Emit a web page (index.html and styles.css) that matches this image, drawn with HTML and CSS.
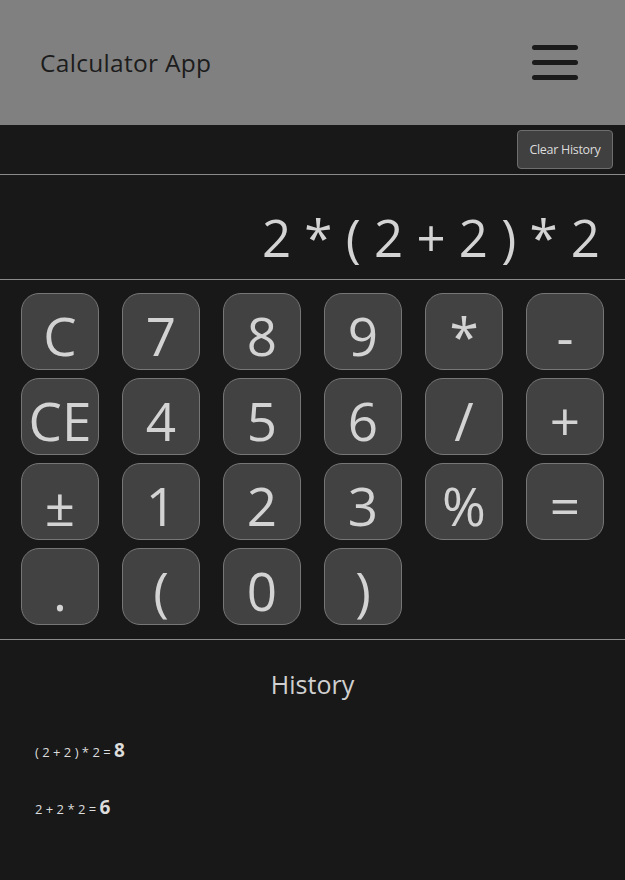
FILE: index.html
```html
<!DOCTYPE html>
<html lang="en">
<head>
<meta charset="utf-8">
<title>Calculator App</title>
<link rel="stylesheet" href="styles.css">
</head>
<body>
<header class="app-header">
  <h1 class="app-title">Calculator App</h1>
  <button class="menu-btn" aria-label="Menu">
    <span class="bar"></span><span class="bar"></span><span class="bar"></span>
  </button>
</header>
<div class="toolbar">
  <button class="clear-history">Clear History</button>
</div>
<div class="display">2 * ( 2 + 2 ) * 2</div>
<div class="keypad">
  <button class="key">C</button>
  <button class="key">7</button>
  <button class="key">8</button>
  <button class="key">9</button>
  <button class="key">*</button>
  <button class="key">-</button>
  <button class="key">CE</button>
  <button class="key">4</button>
  <button class="key">5</button>
  <button class="key">6</button>
  <button class="key">/</button>
  <button class="key">+</button>
  <button class="key">±</button>
  <button class="key">1</button>
  <button class="key">2</button>
  <button class="key">3</button>
  <button class="key">%</button>
  <button class="key">=</button>
  <button class="key">.</button>
  <button class="key">(</button>
  <button class="key">0</button>
  <button class="key">)</button>
</div>
<section class="history">
  <h2 class="history-title">History</h2>
  <ul class="history-list">
    <li class="history-item">( 2 + 2 ) * 2 = <b class="result">8</b></li>
    <li class="history-item">2 + 2 * 2 = <b class="result">6</b></li>
  </ul>
</section>
</body>
</html>
```

FILE: styles.css
```css
* { box-sizing: border-box; }
html, body {
  margin: 0;
  padding: 0;
  background: #181818;
  font-family: "Open Sans", "Noto Sans", sans-serif;
  color: #d3d3d3;
}
.app-header {
  height: 125px;
  background: #808080;
  display: flex;
  align-items: center;
  justify-content: space-between;
  padding: 0 47px 0 40px;
}
.app-title {
  margin: 0;
  font-size: 24.5px;
  font-weight: 400;
  color: #1c1c1c;
  letter-spacing: 0.3px;
}
.menu-btn {
  background: none;
  border: 0;
  padding: 0;
  width: 46px;
  display: flex;
  flex-direction: column;
  gap: 10px;
  cursor: pointer;
}
.bar {
  display: block;
  height: 5px;
  border-radius: 3px;
  background: #1a1a1a;
}
.toolbar {
  display: flex;
  justify-content: flex-end;
  padding: 5px 12px 5px;
  border-bottom: 1px solid #8a8a8a;
}
.clear-history {
  height: 39px;
  width: 96px;
  padding: 0;
  background: #404040;
  border: 1px solid #6e6e6e;
  border-radius: 4px;
  color: #dcdcdc;
  font-family: inherit;
  font-size: 12.5px;
  letter-spacing: -0.3px;
}
.display {
  height: 105px;
  border-bottom: 1px solid #8a8a8a;
  text-align: right;
  padding: 37px 26px 0 0;
  font-size: 51px;
  line-height: 1;
  letter-spacing: -1px;
  word-spacing: 2px;
  color: #d3d3d3;
  white-space: pre;
}
.keypad {
  display: grid;
  grid-template-columns: repeat(6, 78px);
  grid-auto-rows: 77px;
  gap: 8px 23px;
  padding: 13px 21px 14px;
  border-bottom: 1px solid #8a8a8a;
}
.key {
  background: #424242;
  border: 1px solid #767676;
  border-radius: 18px;
  color: #d3d3d3;
  font-family: inherit;
  font-size: 53px;
  line-height: 1;
  padding: 8px 0 0;
  display: flex;
  align-items: center;
  justify-content: center;
}
.history {
  padding-top: 28px;
}
.history-title {
  margin: 0;
  text-align: center;
  font-size: 25px;
  font-weight: 400;
  color: #d0d0d0;
  line-height: 32px;
}
.history-list {
  list-style: none;
  margin: 0;
  padding: 37px 0 0 35px;
}
.history-item {
  font-size: 13px;
  color: #dcdcdc;
  height: 57px;
}
.result {
  font-size: 19px;
  font-weight: 700;
}
```
